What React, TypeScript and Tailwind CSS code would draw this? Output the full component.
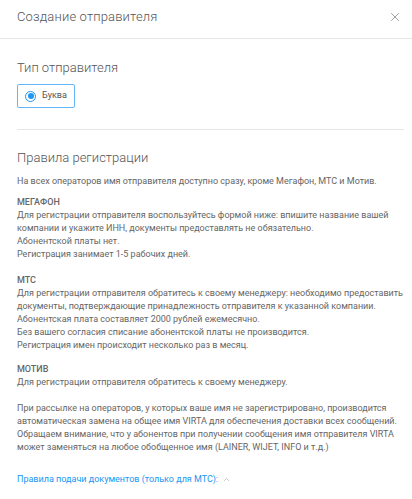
import { X, ChevronUp } from "lucide-react";

const font = { fontFamily: "Roboto, 'Noto Sans', sans-serif" };

export default function App() {
  return (
    <div className="w-[412px] h-[499px] overflow-hidden bg-white text-[#555]" style={font}>
      <header className="flex h-[39px] items-center justify-between border-b border-[#e6e6e6] pl-[17px] pr-[10px]">
        <h1 className="pb-[4px] text-[13px] font-light tracking-[0.15px] text-[#555]">Создание отправителя</h1>
        <X className="mb-[4px] h-[14px] w-[14px] text-[#777]" strokeWidth={1.2} />
      </header>

      <div className="pl-[17px] pr-[8px]">
        <div className="pt-[20px] text-[13px] font-light leading-[18px] text-[#555]">Тип отправителя</div>
        <div className="mt-[7px] inline-flex h-[24px] items-center gap-[6px] rounded-[2px] border border-[#64b5f6] px-[7px]">
          <span className="grid h-[11px] w-[11px] place-items-center rounded-full border border-[#2196f3]">
            <span className="h-[6px] w-[6px] rounded-full bg-[#2196f3]" />
          </span>
          <span className="text-[9px] text-[#555]">Буква</span>
        </div>

        <div className="mt-[21px] border-t border-[#e6e6e6]" />

        <h2 className="mt-[19px] text-[13px] font-light leading-[18px] text-[#555]">Правила регистрации</h2>

        <div className="mt-[8px] text-[9px] leading-[13px] text-[#666]">
          <p>На всех операторов имя отправителя доступно сразу, кроме Мегафон, МТС и Мотив.</p>

          <p className="mt-[8px]">
            <span className="font-medium">МЕГАФОН</span>
            <br />
            Для регистрации отправителя воспользуйтесь формой ниже: впишите название вашей компании и укажите ИНН, документы предоставлять не обязательно.
            <br />
            Абонентской платы нет.
            <br />
            Регистрация занимает 1-5 рабочих дней.
          </p>

          <p className="mt-[13px]">
            <span className="font-medium">МТС</span>
            <br />
            Для регистрации отправителя обратитесь к своему менеджеру: необходимо предоставить документы, подтверждающие принадлежность отправителя к указанной компании.
            <br />
            Абонентская плата составляет 2000 рублей ежемесячно.
            <br />
            Без вашего согласия списание абонентской платы не производится.
            <br />
            Регистрация имен происходит несколько раз в месяц.
          </p>

          <p className="mt-[11px]">
            <span className="font-medium">МОТИВ</span>
            <br />
            Для регистрации отправителя обратитесь к своему менеджеру.
          </p>

          <p className="mt-[13px]">
            При рассылке на операторов, у которых ваше имя не зарегистрировано, производится автоматическая замена на общее имя VIRTA для обеспечения доставки всех сообщений. Обращаем внимание, что у абонентов при получении сообщения имя отправителя VIRTA может заменяться на любое обобщенное имя (LAINER, WIJET, INFO и т.д.)
          </p>

          <button className="mt-[19px] flex h-[13px] items-center gap-[4px] text-[9px] text-[#2196f3]">
            Правила подачи документов (только для МТС):
            <ChevronUp className="h-[9px] w-[9px] text-[#999]" strokeWidth={1.5} />
          </button>
        </div>
      </div>
    </div>
  );
}
